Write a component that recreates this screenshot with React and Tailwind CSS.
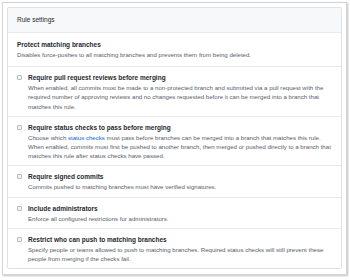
const rules = [
  {
    title: 'Require pull request reviews before merging',
    desc: (
      <>
        When enabled, all commits must be made to a non-protected branch and submitted via a pull request with the
        required number of approving reviews and no changes requested before it can be merged into a branch that
        matches this rule.
      </>
    ),
  },
  {
    title: 'Require status checks to pass before merging',
    desc: (
      <>
        Choose which <span className="text-[#0366d6]">status checks</span> must pass before branches can be merged
        into a branch that matches this rule. When enabled, commits must first be pushed to another branch, then
        merged or pushed directly to a branch that matches this rule after status checks have passed.
      </>
    ),
  },
  {
    title: 'Require signed commits',
    desc: <>Commits pushed to matching branches must have verified signatures.</>,
  },
  {
    title: 'Include administrators',
    desc: <>Enforce all configured restrictions for administrators.</>,
  },
  {
    title: 'Restrict who can push to matching branches',
    desc: (
      <>
        Specify people or teams allowed to push to matching branches. Required status checks will still prevent these
        people from merging if the checks fail.
      </>
    ),
  },
];

function Rule({ title, desc }) {
  return (
    <div className="flex gap-[6px] border-t border-[#e8eaed] pl-[9px] pr-[10px] pt-[5px] pb-[5px]">
      <div className="mt-[3px] h-[5px] w-[5px] shrink-0 rounded-[1px] border border-[#b8bcc0] bg-[#f3f4f6]" />
      <div className="min-w-0">
        <div className="text-[6.5px] font-bold leading-[11px] text-[#24292e]">{title}</div>
        <div className="text-[6.1px] leading-[9.2px] text-[#586069]">{desc}</div>
      </div>
    </div>
  );
}

export default function App() {
  return (
    <div className="h-[280px] w-[350px] bg-white pl-[2px] pt-[2px]" style={{ fontFamily: '"Liberation Sans", Arial, sans-serif' }}>
      <div className="h-[273px] w-[345px] overflow-hidden border border-[#d4d4d4] bg-white p-[4px] shadow-[1px_1px_2px_rgba(0,0,0,0.25)]">
        <div className="overflow-hidden rounded-[2px] border border-[#dfe2e5]">
          <div className="flex h-[24px] items-center bg-[#f6f8fa] px-[9px] text-[6.5px] text-[#24292e]">Rule settings</div>
          <div className="border-t border-[#e8eaed] px-[9px] pt-[6px] pb-[7px]">
            <div className="text-[6.5px] font-bold leading-[11px] text-[#24292e]">Protect matching branches</div>
            <div className="text-[6.1px] leading-[9.2px] text-[#586069]">
              Disables force-pushes to all matching branches and prevents them from being deleted.
            </div>
          </div>
          {rules.map((r) => (
            <Rule key={r.title} title={r.title} desc={r.desc} />
          ))}
        </div>
      </div>
    </div>
  );
}
